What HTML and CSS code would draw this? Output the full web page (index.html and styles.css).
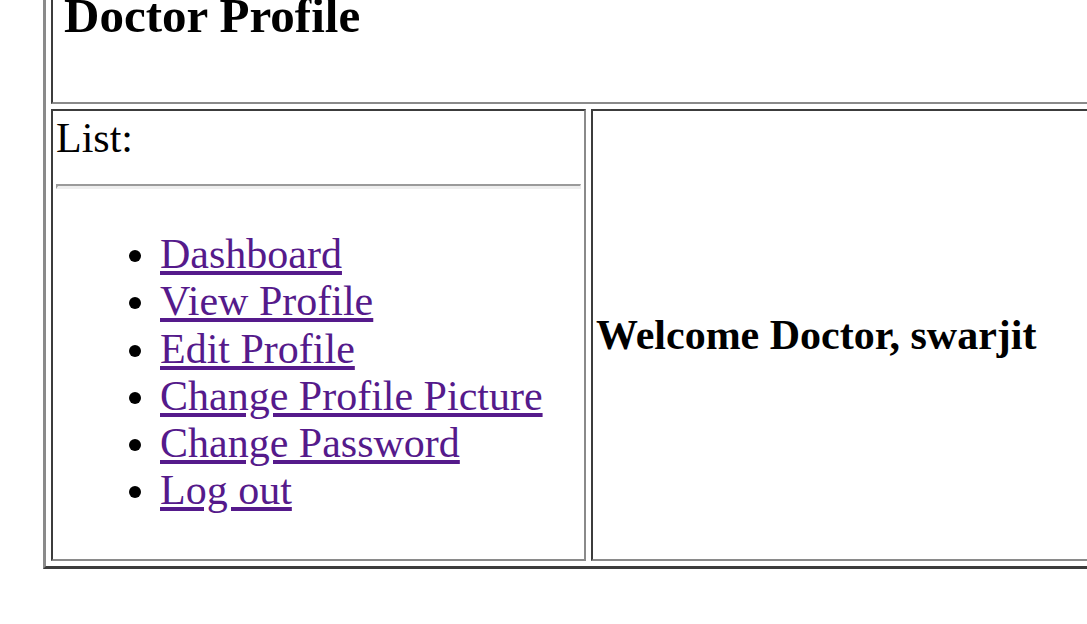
FILE: index.html
```html
<!DOCTYPE html>
<html>
<head>
<meta charset="utf-8">
<title>Doctor Profile</title>
<link rel="stylesheet" href="styles.css">
</head>
<body class="page">
<table class="frame">
  <colgroup>
    <col class="col-side">
    <col class="col-main">
  </colgroup>
  <tr>
    <td class="cell head-cell" colspan="2"><h3 class="title">Doctor Profile</h3></td>
  </tr>
  <tr>
    <td class="cell side-cell">
      <div class="side-label">List:</div>
      <hr class="rule">
      <ul class="menu">
        <li><a class="menu-link" href="#">Dashboard</a></li>
        <li><a class="menu-link" href="#">View Profile</a></li>
        <li><a class="menu-link" href="#">Edit Profile</a></li>
        <li><a class="menu-link" href="#">Change Profile Picture</a></li>
        <li><a class="menu-link" href="#">Change Password</a></li>
        <li><a class="menu-link" href="#">Log out</a></li>
      </ul>
    </td>
    <td class="cell main-cell"><b class="welcome">Welcome Doctor, swarjit</b></td>
  </tr>
</table>
</body>
</html>
```

FILE: styles.css
```css
html {
  overflow: hidden;
  background: #ffffff;
}

.page {
  margin: 0;
  font-family: "Liberation Serif", "Times New Roman", serif;
  font-size: 42px;
  line-height: 1.124;
  color: #000000;
}

.frame {
  margin: -81px 0 0 43px;
  border-style: solid;
  border-width: 3px;
  border-color: #8a8a8a #3c3c3c #3c3c3c #8a8a8a;
  border-spacing: 5px;
  table-layout: fixed;
  width: 1300px;
}

.col-side {
  width: 535px;
}

.cell {
  border-style: solid;
  border-width: 2px;
  border-color: #3c3c3c #8a8a8a #8a8a8a #3c3c3c;
  padding: 3px;
}

.title {
  margin: 56px 0 56px 8px;
  font-size: 49px;
  font-weight: bold;
}

.side-cell {
  vertical-align: top;
  padding-top: 4px;
}

.main-cell {
  vertical-align: middle;
}

.rule {
  margin: 22px 0 20px;
  height: 0;
  border-style: solid;
  border-width: 2px 1px 3px 2px;
  border-color: #9a9a9a #eeeeee #eeeeee #9a9a9a;
}

.menu {
  margin: 42px 0 42px;
  padding-left: 104px;
  list-style: disc;
}

.menu-link {
  color: #551a8b;
  text-decoration: underline;
}

.welcome {
  font-weight: bold;
}
```
